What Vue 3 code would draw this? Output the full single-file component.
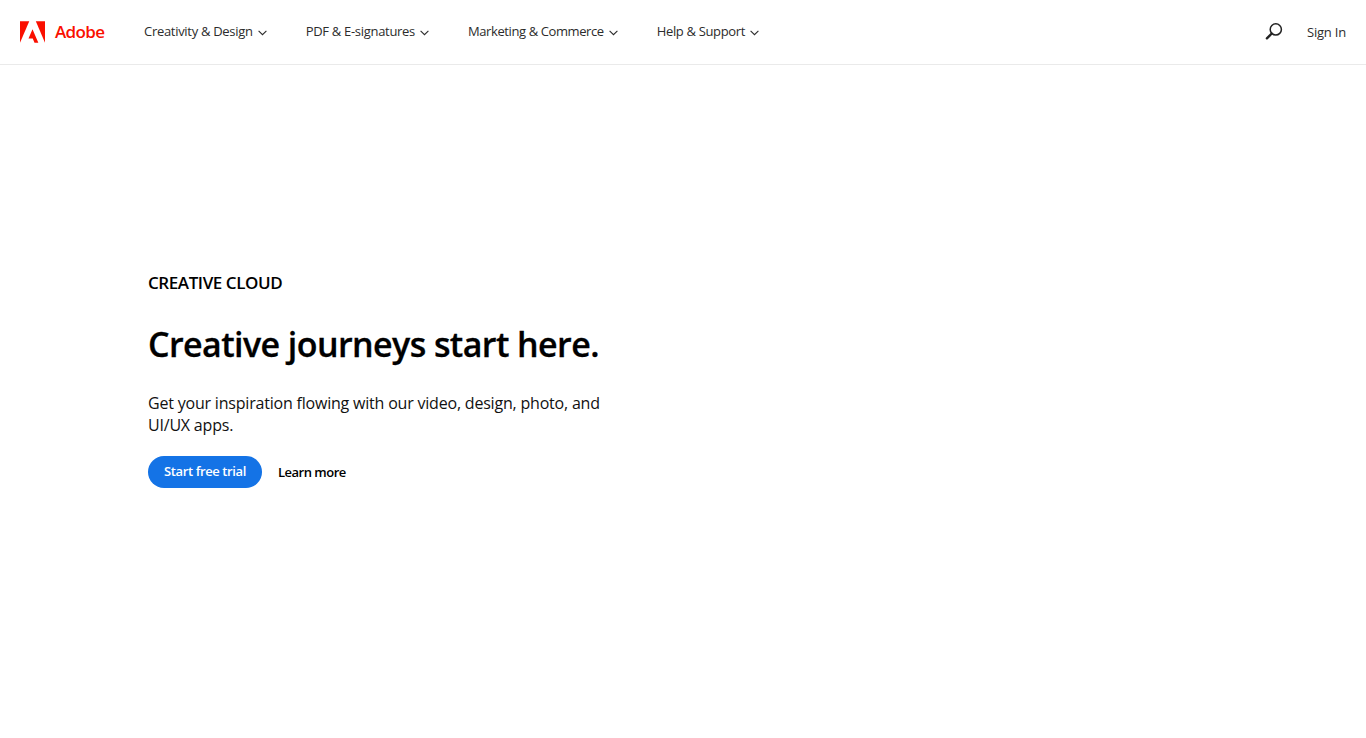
<script setup>
const navItems = [
  { label: 'Creativity & Design', tracking: '-0.3px' },
  { label: 'PDF & E-signatures', tracking: '-0.3px' },
  { label: 'Marketing & Commerce', tracking: '-0.4px' },
  { label: 'Help & Support', tracking: '-0.35px' },
]
</script>

<template>
  <div class="page">
    <header class="header">
      <a class="brand">
        <svg class="logo" viewBox="0 0 30 26" aria-hidden="true">
          <path d="M19 0h11v26z" />
          <path d="M11.1 0H0v26z" />
          <path d="M15 9.6l7 16.4h-4.6l-2.1-5.2H10.2z" />
        </svg>
        <span class="wordmark">Adobe</span>
      </a>
      <nav class="nav">
        <a v-for="item in navItems" :key="item.label" class="nav-item">
          <span :style="{ letterSpacing: item.tracking }">{{ item.label }}</span>
          <svg class="chevron" viewBox="0 0 9 6" aria-hidden="true">
            <path d="M.6.8l3.9 3.9L8.4.8" />
          </svg>
        </a>
      </nav>
      <div class="tools">
        <svg class="search" viewBox="0 0 18 18" aria-hidden="true">
          <circle cx="10.8" cy="6.4" r="5.6" />
          <path class="handle" d="M6.7 10.5L1.9 15.3" />
        </svg>
        <a class="sign-in">Sign In</a>
      </div>
    </header>
    <main class="hero">
      <p class="eyebrow">CREATIVE CLOUD</p>
      <h1 class="title">Creative journeys start here.</h1>
      <p class="lead">Get your inspiration flowing with our video, design, photo, and UI/UX apps.</p>
      <div class="actions">
        <a class="primary">Start free trial</a>
        <a class="secondary">Learn more</a>
      </div>
    </main>
  </div>
</template>

<style>
html, body { margin: 0; background: #fff; }
</style>

<style scoped>
.page {
  height: 738px;
  display: flex;
  flex-direction: column;
  font-family: "Open Sans", "Noto Sans", sans-serif;
  background: #fff;
  overflow: hidden;
}
.header {
  height: 64px;
  flex: none;
  display: flex;
  align-items: center;
  padding: 0 20px;
  border-bottom: 1px solid #eaeaea;
}
.brand { display: flex; align-items: center; gap: 10px; width: 124px; flex: none; }
.logo { width: 25px; height: 22px; fill: #fa0f00; flex: none; }
.wordmark { font-size: 17px; font-weight: 600; color: #fa0f00; letter-spacing: -0.65px; margin-bottom: 1px; }
.nav { display: flex; gap: 39px; flex: 1; padding-bottom: 2px; }
.nav-item {
  display: flex;
  align-items: center;
  gap: 5px;
  font-size: 13px;
  color: #2c2c2c;
}
.chevron { width: 9px; height: 6px; margin-top: 4px; fill: none; stroke: #2c2c2c; stroke-width: 1.1; }
.tools { display: flex; align-items: center; gap: 24px; }
.search { width: 18px; height: 18px; fill: none; stroke: #222; stroke-width: 1.5; }
.handle { stroke-width: 2.4; stroke-linecap: round; }
.sign-in { font-size: 13px; color: #2c2c2c; letter-spacing: -0.2px; }
.hero {
  flex: 1;
  display: flex;
  flex-direction: column;
  justify-content: center;
  padding: 0 0 43px 148px;
  color: #000;
}
.eyebrow { margin: 0; font-size: 17px; line-height: 20px; font-weight: 600; letter-spacing: -0.42px; }
.title { margin: 31px 0 0; font-size: 34px; line-height: 40px; font-weight: 600; letter-spacing: -0.58px; -webkit-text-stroke: 0.3px #000; }
.lead { margin: 28px 0 0; width: 470px; font-size: 16px; line-height: 22px; letter-spacing: -0.2px; color: #111; }
.actions { display: flex; align-items: center; gap: 16px; margin-top: 20px; }
.primary {
  height: 32px;
  width: 114px;
  border-radius: 16px;
  background: #1473e6;
  color: #fff;
  display: flex;
  align-items: center;
  justify-content: center;
  font-size: 13px;
  font-weight: 600;
  letter-spacing: -0.4px;
  padding-bottom: 1px;
  box-sizing: border-box;
}
.secondary { font-size: 13px; font-weight: 600; color: #000; letter-spacing: -0.5px; }
</style>
